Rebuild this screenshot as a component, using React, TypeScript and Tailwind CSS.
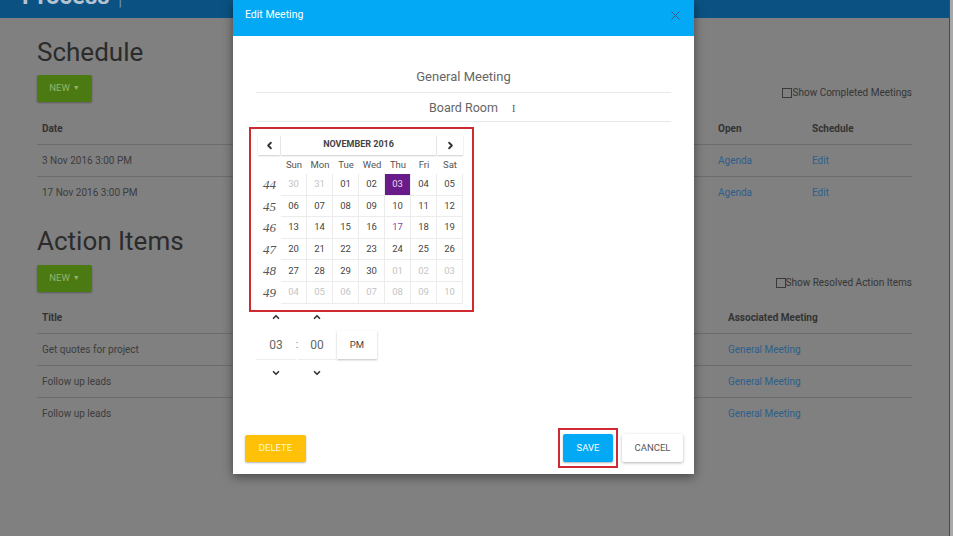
import { ChevronDown, ChevronLeft, ChevronRight, ChevronUp, X } from "lucide-react";

type Day = { d: string; other?: boolean; selected?: boolean; today?: boolean };

const WEEKS: { n: number; days: Day[] }[] = [
  { n: 44, days: [{ d: "30", other: true }, { d: "31", other: true }, { d: "01" }, { d: "02" }, { d: "03", selected: true }, { d: "04" }, { d: "05" }] },
  { n: 45, days: ["06", "07", "08", "09", "10", "11", "12"].map((d) => ({ d })) },
  { n: 46, days: [{ d: "13" }, { d: "14" }, { d: "15" }, { d: "16" }, { d: "17", today: true }, { d: "18" }, { d: "19" }] },
  { n: 47, days: ["20", "21", "22", "23", "24", "25", "26"].map((d) => ({ d })) },
  {
    n: 48,
    days: [{ d: "27" }, { d: "28" }, { d: "29" }, { d: "30" }, { d: "01", other: true }, { d: "02", other: true }, { d: "03", other: true }],
  },
  { n: 49, days: ["04", "05", "06", "07", "08", "09", "10"].map((d) => ({ d, other: true })) },
];

const WEEKDAYS = ["Sun", "Mon", "Tue", "Wed", "Thu", "Fri", "Sat"];

function NewButton() {
  return (
    <div className="flex h-[27px] w-[55px] items-center justify-center gap-[3px] rounded-[2px] bg-[#4c7a12] text-[9.5px] text-[#95b46f] shadow-[0_1px_2px_rgba(0,0,0,0.3)]">
      NEW <span className="text-[7px]">▼</span>
    </div>
  );
}

function CheckLabel({ label }: { label: string }) {
  return (
    <div className="mb-[3px] flex items-center text-[10px] leading-[12px] text-[#353535]">
      <span className="h-[10px] w-[10px] border border-[#3a3a3a]" />
      {label}
    </div>
  );
}

function Calendar() {
  const cell = "flex items-center justify-center bg-white shadow-[0_1px_1.5px_rgba(0,0,0,0.2)]";
  return (
    <div className="mt-[5px] h-[185px] w-[225px] border-2 border-[#cf2a31] pt-[6px] pl-[7px]">
      <div className="grid grid-cols-[23px_repeat(7,26px)]">
        <div className={`${cell} mr-px h-[20px] text-[#333]`}>
          <ChevronLeft size={11} strokeWidth={4} />
        </div>
        <div className={`${cell} col-span-6 mr-px h-[20px] text-[9px] font-bold text-[#444]`}>NOVEMBER 2016</div>
        <div className={`${cell} h-[20px] text-[#333]`}>
          <ChevronRight size={11} strokeWidth={4} />
        </div>

        <div className="h-[19px]" />
        {WEEKDAYS.map((w) => (
          <div key={w} className="flex h-[19px] items-center justify-center pt-[1px] text-[9.5px] text-[#555]">
            {w}
          </div>
        ))}

        {WEEKS.map((week) => (
          <div key={week.n} className="contents">
            <div className="flex h-[21.6px] items-center justify-center font-['Liberation_Serif',serif] text-[13px] italic text-[#555]">
              {week.n}
            </div>
            {week.days.map((day, i) => (
              <div
                key={i}
                className={`flex h-[21.6px] items-center justify-center border-r border-b border-[#ececec] text-[9.5px] ${
                  day.selected
                    ? "bg-[#6a1b8a] text-[#e8d8ee]"
                    : day.today
                      ? "bg-white text-[#8e3fa8]"
                      : day.other
                        ? "bg-white text-[#c4c4c4]"
                        : "bg-white text-[#444]"
                }`}
              >
                {day.d}
              </div>
            ))}
          </div>
        ))}
      </div>
    </div>
  );
}

function TimePicker() {
  return (
    <div className="ml-[7px] grid grid-cols-[40px_2px_38px_1px_40px] text-[#333]">
      <div className="flex h-[10px] items-center justify-center">
        <ChevronUp size={10} strokeWidth={4} />
      </div>
      <div />
      <div className="flex h-[10px] items-center justify-center">
        <ChevronUp size={10} strokeWidth={4} />
      </div>
      <div />
      <div />

      <div className="flex h-[46px] items-center justify-center">
        <div className="flex h-[30px] w-[40px] items-center justify-center border-b border-[#eeeeee] text-[12px] text-[#666]">03</div>
      </div>
      <div className="flex h-[46px] items-center justify-center text-[11px] text-[#888]">:</div>
      <div className="flex h-[46px] items-center justify-center">
        <div className="flex h-[30px] w-[38px] items-center justify-center border-b border-[#eeeeee] text-[12px] text-[#666]">00</div>
      </div>
      <div />
      <div className="flex h-[46px] items-center justify-center">
        <div className="flex h-[28px] w-[40px] items-center justify-center bg-white text-[9.5px] text-[#444] shadow-[0_1px_2px_rgba(0,0,0,0.25)]">
          PM
        </div>
      </div>

      <div className="flex h-[10px] items-center justify-center">
        <ChevronDown size={10} strokeWidth={4} />
      </div>
      <div />
      <div className="flex h-[10px] items-center justify-center">
        <ChevronDown size={10} strokeWidth={4} />
      </div>
      <div />
      <div />
    </div>
  );
}

function EditMeetingModal() {
  return (
    <div className="absolute top-0 left-[233px] flex h-[474px] w-[461px] flex-col bg-white shadow-[0_3px_10px_rgba(0,0,0,0.45)]">
      <div className="flex h-[36px] items-center justify-between bg-[#03a9f4] pr-[11px] pb-[6px] pl-[12px]">
        <span className="text-[10.5px] text-white">Edit Meeting</span>
        <X size={15} strokeWidth={1.6} className="text-[#2a5d84]" />
      </div>

      <div className="px-[16px] pt-[27px]">
        <div className="mx-[7px] flex h-[30px] items-center justify-center border-b border-[#e8e8e8] pb-[2px] text-[13px] text-[#666]">
          General Meeting
        </div>
        <div className="relative mx-[7px] flex h-[29px] items-center justify-center border-b border-[#e8e8e8] pt-[2px] text-[12.5px] text-[#666]">
          Board Room
          <span className="absolute top-[11px] left-[256px] font-['Liberation_Serif',serif] text-[10px] leading-none text-[#555]">I</span>
        </div>
        <Calendar />
        <TimePicker />
      </div>

      <div className="mt-auto mb-[6px] flex h-[40px] items-center justify-between pr-[11px] pl-[12px]">
        <div className="flex h-[27px] w-[61px] items-center justify-center rounded-[2px] bg-[#ffc107] text-[9.5px] text-[#fff6d8] shadow-[0_1px_2px_rgba(0,0,0,0.3)]">
          DELETE
        </div>
        <div className="flex items-center gap-[4px]">
          <div className="border-2 border-[#cf2a31] px-[3px] py-[4px]">
            <div className="flex h-[28px] w-[50px] items-center justify-center rounded-[2px] bg-[#03a9f4] text-[9.5px] text-white shadow-[0_1px_2px_rgba(0,0,0,0.3)]">
              SAVE
            </div>
          </div>
          <div className="flex h-[28px] w-[61px] items-center justify-center rounded-[2px] bg-white text-[9.5px] text-[#555] shadow-[0_1px_3px_rgba(0,0,0,0.3)]">
            CANCEL
          </div>
        </div>
      </div>
    </div>
  );
}

export default function App() {
  return (
    <div className="relative flex h-[536px] w-[953px] overflow-hidden bg-[#808080] font-['Roboto',sans-serif]">
      <div className="min-w-0 flex-1">
        <header className="h-[18px] overflow-hidden bg-[#0b5283]">
          <div className="-mt-[18px] flex items-baseline gap-[8px] pl-[22px] text-[24px] leading-[28px] font-bold text-[#b4c3cf]">
            Process <span className="font-light text-[#6f90a8]">|</span>
          </div>
        </header>

        <main className="pr-[37px] pl-[37px]">
          <h1 className="mt-[19px] text-[26px] leading-[30px] text-[#2b2b2b]">Schedule</h1>
          <div className="mt-[8px] flex items-end justify-between">
            <NewButton />
            <CheckLabel label="Show Completed Meetings" />
          </div>
          <div className="text-[10px] leading-[12px]">
            <div className="grid h-[43px] grid-cols-[676px_94px_1fr] items-end border-b border-[#6c6c6c] pb-[9px] pl-[5px] font-bold text-[#333]">
              <span>Date</span>
              <span>Open</span>
              <span>Schedule</span>
            </div>
            {["3 Nov 2016 3:00 PM", "17 Nov 2016 3:00 PM"].map((d, i) => (
              <div
                key={d}
                className={`grid h-[32px] grid-cols-[676px_94px_1fr] items-center pl-[5px] text-[#3c3c3c] ${
                  i === 0 ? "border-b border-[#6c6c6c]" : ""
                }`}
              >
                <span>{d}</span>
                <span className="text-[#2d5f8b]">Agenda</span>
                <span className="text-[#2d5f8b]">Edit</span>
              </div>
            ))}
          </div>

          <h1 className="mt-[17px] text-[26px] leading-[30px] text-[#2b2b2b]">Action Items</h1>
          <div className="mt-[9px] flex items-end justify-between">
            <NewButton />
            <CheckLabel label="Show Resolved Action Items" />
          </div>
          <div className="text-[10px] leading-[12px]">
            <div className="grid h-[42px] grid-cols-[686px_1fr] items-end border-b border-[#6c6c6c] pb-[9px] pl-[5px] font-bold text-[#333]">
              <span>Title</span>
              <span>Associated Meeting</span>
            </div>
            {["Get quotes for project", "Follow up leads", "Follow up leads"].map((t, i) => (
              <div
                key={i}
                className={`grid h-[32px] grid-cols-[686px_1fr] items-center pl-[5px] text-[#3c3c3c] ${
                  i < 2 ? "border-b border-[#6c6c6c]" : ""
                }`}
              >
                <span>{t}</span>
                <span className="text-[#2d5f8b]">General Meeting</span>
              </div>
            ))}
          </div>
        </main>
      </div>
      <div className="w-px bg-[#4a4a4a]" />
      <div className="w-[3px] bg-[#a8a8a8]" />

      <EditMeetingModal />
    </div>
  );
}
